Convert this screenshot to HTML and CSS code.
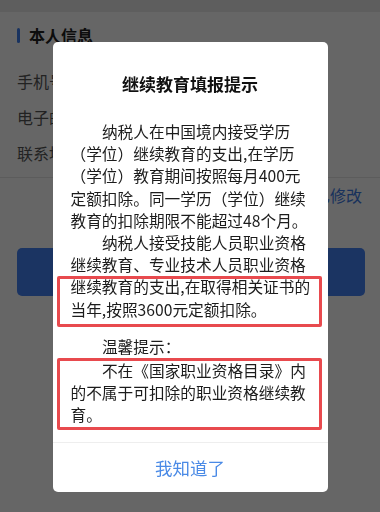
FILE: index.html
```html
<!DOCTYPE html>
<html lang="zh-CN">
<head>
  <meta charset="UTF-8">
  <meta name="viewport" content="width=device-width, initial-scale=1.0">
  <title>本人信息</title>
  <link rel="stylesheet" href="styles.css">
</head>
<body>

  <div class="page">
    <div class="topbar"></div>
    <div class="section-title">本人信息</div>
    <div class="info-list">
      <div class="info-row">手机号码</div>
      <div class="info-row">电子邮箱</div>
      <div class="info-row">联系地址</div>
    </div>
    <div class="edit-row"><span class="edit-link">已修改</span></div>
    <button class="submit-btn" type="button"></button>
  </div>

  <div class="mask">
    <div class="dialog">
      <div class="dialog-title">继续教育填报提示</div>
      <div class="dialog-body">
        <p class="para indent">纳税人在中国境内接受学历（学位）继续教育的支出,在学历（学位）教育期间按照每月400元定额扣除。同一学历（学位）继续教育的扣除期限不能超过48个月。</p>
        <p class="para indent">纳税人接受技能人员职业资格继续教育、专业技术人员职业资格</p>
        <p class="para mark mark-first">继续教育的支出,在取得相关证书的当年,按照3600元定额扣除。</p>
        <p class="para indent tip">温馨提示：</p>
        <p class="para indent mark mark-last">不在《国家职业资格目录》内的不属于可扣除的职业资格继续教育。</p>
      </div>
      <div class="dialog-footer">我知道了</div>
    </div>
  </div>

</body>
</html>
```

FILE: styles.css
```css
html, body {
  margin: 0;
  padding: 0;
}

body {
  width: 380px;
  height: 512px;
  overflow: hidden;
  background-color: #fff;
  font-family: "Noto Sans CJK SC", "Noto Sans", sans-serif;
  color: #333;
}

.topbar {
  height: 12px;
  background-color: #ececec;
}

.section-title {
  display: flex;
  align-items: center;
  margin: 11px 0 0 17px;
  height: 24px;
  font-size: 16px;
  font-weight: bold;
  color: #222;
}

.section-title::before {
  content: "";
  width: 3px;
  height: 15px;
  margin-right: 9px;
  border-radius: 2px;
  background-color: #3f7ff0;
}

.info-list {
  margin-top: 16px;
  border-bottom: 1px solid #e6e6e6;
  padding-bottom: 6px;
}

.info-row {
  height: 36px;
  line-height: 36px;
  padding-left: 17px;
  font-size: 16px;
  color: #555;
}

.edit-row {
  display: flex;
  justify-content: flex-end;
  padding: 5px 18px 0 0;
  height: 25px;
  line-height: 24px;
}

.edit-link {
  font-size: 16px;
  color: #3d7be6;
}

.submit-btn {
  display: block;
  width: 348px;
  height: 48px;
  margin: 40px 0 0 17px;
  border: none;
  border-radius: 5px;
  background-color: #4482f5;
}

.mask {
  position: fixed;
  top: 0;
  left: 0;
  width: 380px;
  height: 512px;
  background-color: rgba(0, 0, 0, 0.6);
  display: flex;
  justify-content: center;
  align-items: flex-start;
  padding-top: 42px;
  box-sizing: border-box;
}

.dialog {
  width: 275px;
  background-color: #fff;
  border-radius: 5px;
  overflow: hidden;
}

.dialog-title {
  padding-top: 30px;
  height: 24px;
  line-height: 24px;
  text-align: center;
  font-size: 17px;
  font-weight: bold;
  color: #111;
}

.dialog-body {
  margin-top: 25px;
  padding: 0 6px 12px 4px;
}

.para {
  margin: 0;
  padding: 0 7px 0 14px;
  font-size: 15.7px;
  line-height: 22.2px;
  color: #1c1c1c;
}

.indent {
  text-indent: 2em;
}

.mark {
  outline: 3px solid #e84a4e;
  outline-offset: -3px;
  border-radius: 2px;
}

.mark-first {
  padding-bottom: 6px;
}

.tip {
  margin-top: 9px;
}

.mark-last {
  padding-top: 2px;
  padding-bottom: 3px;
}

.dialog-footer {
  height: 49px;
  line-height: 49px;
  border-top: 1px solid #eee;
  text-align: center;
  font-size: 17.5px;
  color: #4a8ae6;
}
```
